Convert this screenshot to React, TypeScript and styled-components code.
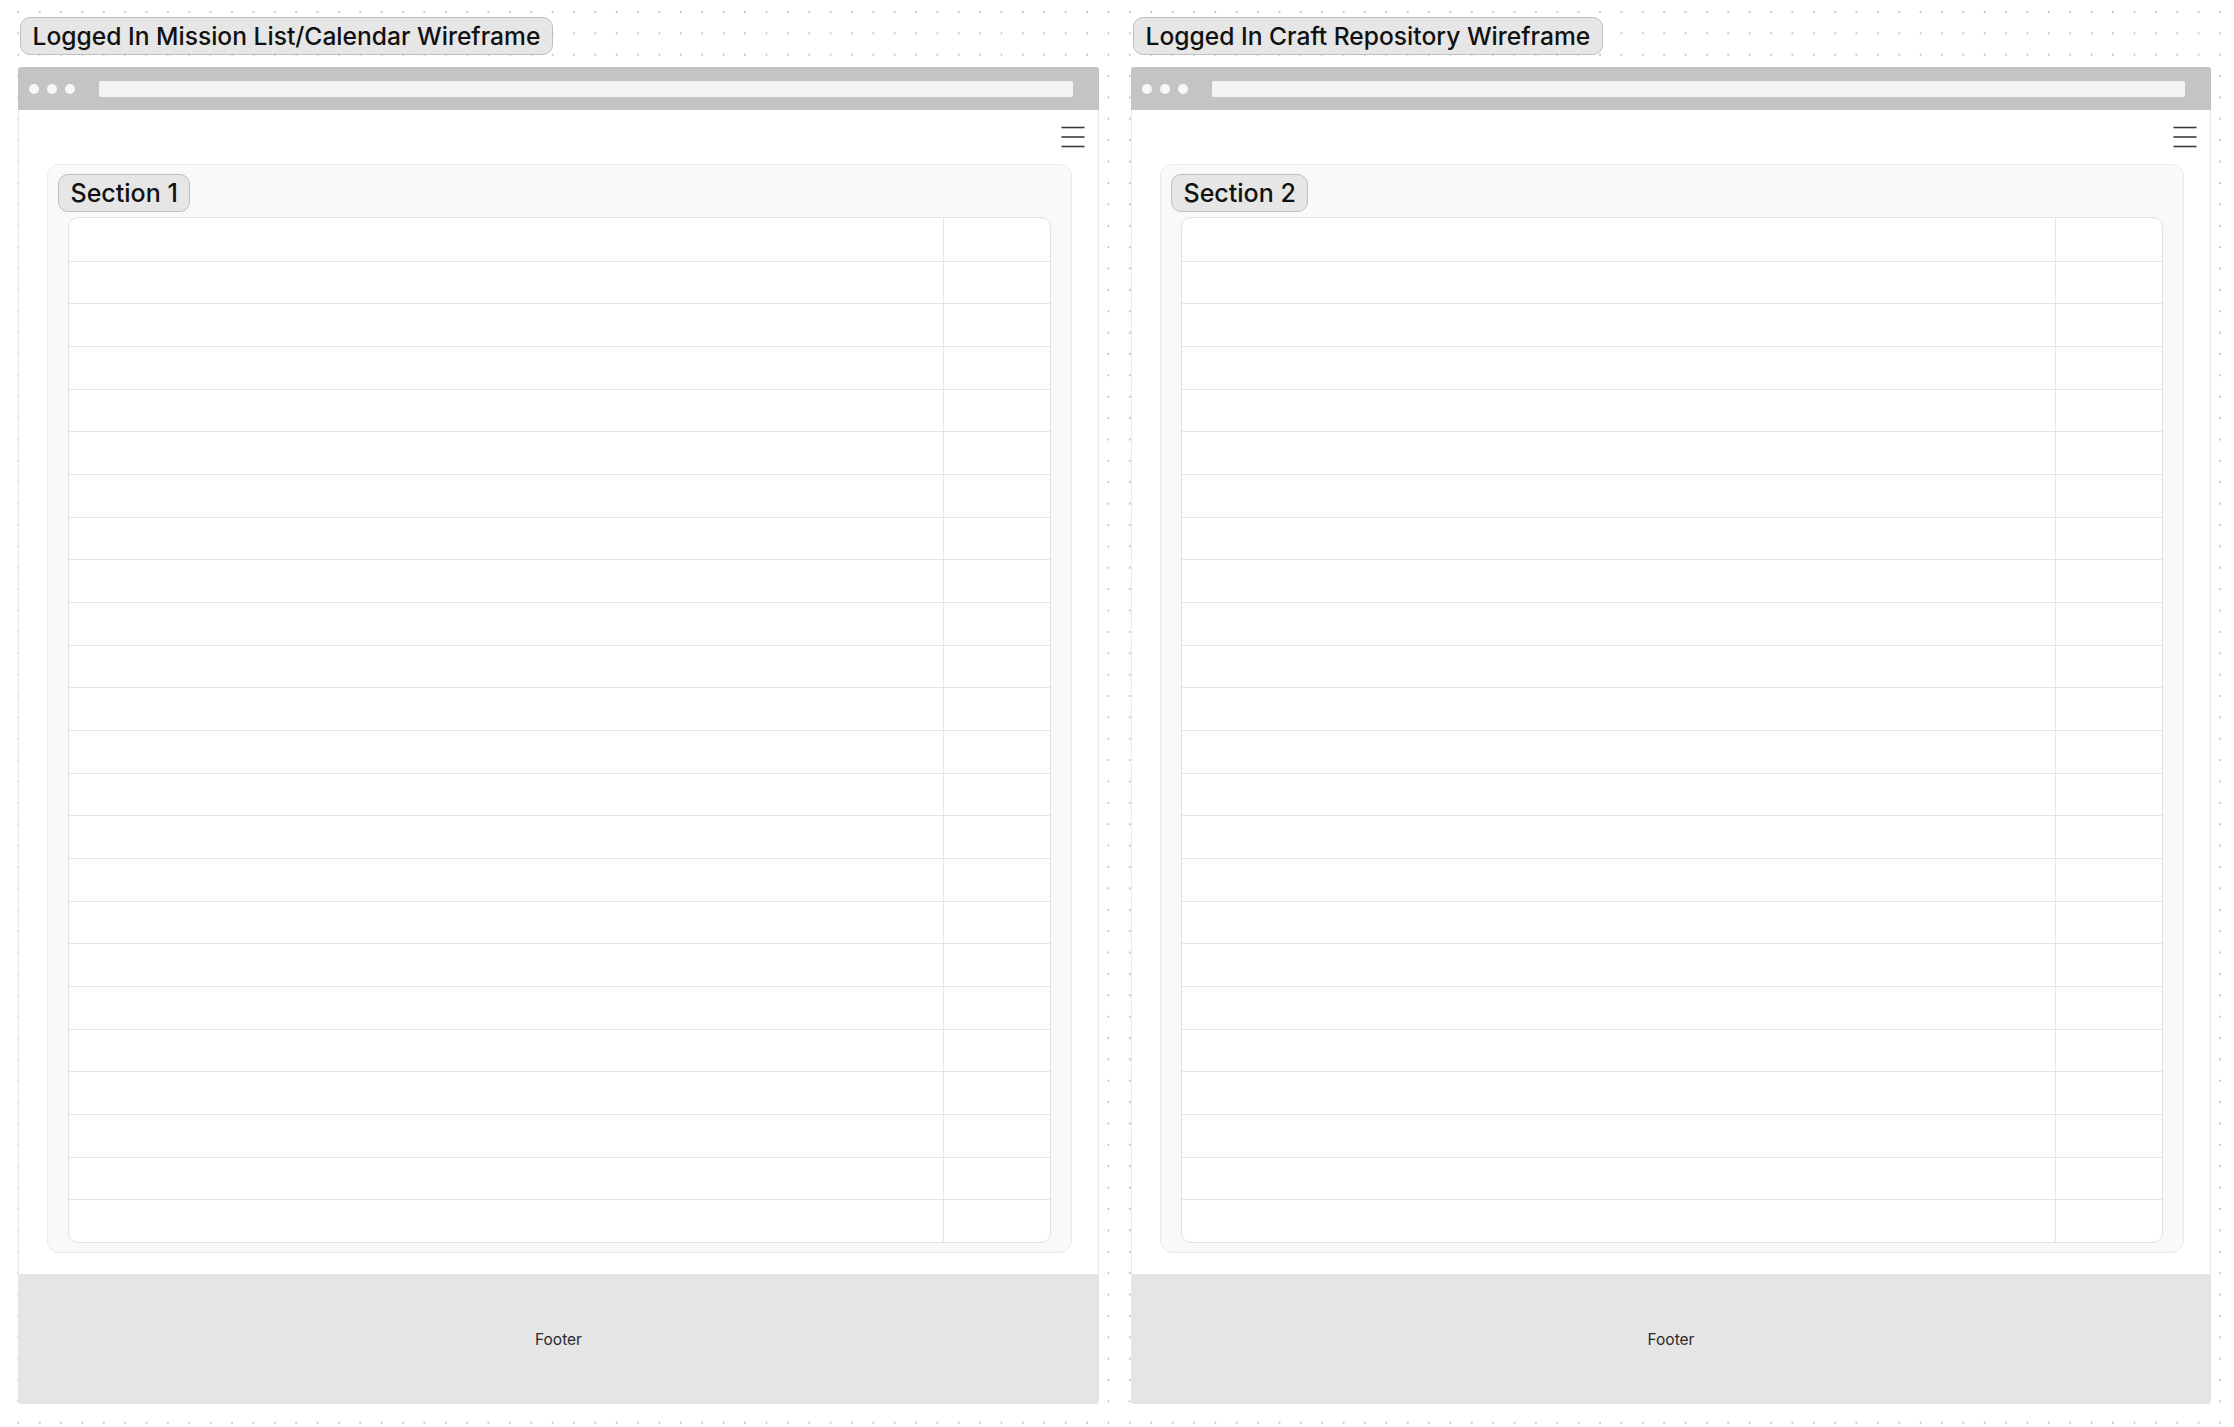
import React from "react";
import styled, { createGlobalStyle } from "styled-components";

const GlobalStyle = createGlobalStyle`
  html, body {
    margin: 0;
    padding: 0;
    background-color: #ffffff;
    font-family: Inter, "Noto Sans", "Liberation Sans", sans-serif;
  }
  * { box-sizing: border-box; }
`;

const Canvas = styled.div`
  width: 2234px;
  height: 1427px;
  overflow: hidden;
  background-color: #ffffff;
  background-image: radial-gradient(circle, #c9c9c9 0.9px, rgba(255,255,255,0) 1.4px);
  background-size: 21.38px 21.38px;
  background-position: 7.6px 1.3px;
  padding: 17px 0 0 18px;
  display: grid;
  grid-template-columns: 1081px 1080px;
  column-gap: 32px;
  align-items: start;
`;

const Column = styled.div`
  display: flex;
  flex-direction: column;
  align-items: flex-start;
`;

const Badge = styled.div<{ $ml?: number; $size: number }>`
  margin-left: ${(p) => p.$ml ?? 0}px;
  height: 38px;
  display: inline-flex;
  align-items: center;
  padding: 0 11.5px;
  background: #e6e6e6;
  border: 1.5px solid #bfbfbf;
  border-radius: 10px;
  color: #111111;
  font-size: ${(p) => p.$size}px;
  font-weight: 500;
  white-space: nowrap;
`;

const Frame = styled.div`
  margin-top: 12px;
  width: 100%;
  display: flex;
  flex-direction: column;
`;

const BrowserBar = styled.div`
  height: 43px;
  background: #c4c4c4;
  border-radius: 3px 3px 0 0;
  display: flex;
  align-items: center;
  padding: 0 26px 0 11px;
`;

const Dots = styled.div`
  display: flex;
  gap: 8px;
  margin-right: 24px;
`;

const Dot = styled.span`
  width: 10px;
  height: 10px;
  border-radius: 50%;
  background: #f7f7f7;
`;

const UrlBar = styled.div`
  flex: 1;
  height: 16px;
  background: #f4f4f4;
  border-radius: 2px;
`;

const Body = styled.div`
  background: #ffffff;
  border-left: 1px solid #e9e9e9;
  border-right: 1px solid #e9e9e9;
  display: flex;
  flex-direction: column;
  padding-bottom: 21px;
`;

const Header = styled.div`
  height: 54px;
  display: flex;
  justify-content: flex-end;
  padding: 16px 13px 0 0;
`;

const Panel = styled.div`
  margin: 0 26px 0 28px;
  background: #f9f9f9;
  border: 1px solid #ebebeb;
  border-radius: 12px;
  padding: 9px 20px 9px 10px;
  display: flex;
  flex-direction: column;
  align-items: flex-start;
`;

const Table = styled.div`
  margin: 5px 0 0 10px;
  align-self: stretch;
  height: 1026px;
  background: #ffffff;
  border: 1px solid #e2e2e2;
  border-radius: 10px;
  display: grid;
  grid-template-rows: repeat(24, 1fr);
  overflow: hidden;
`;

const Row = styled.div<{ $first?: boolean }>`
  display: grid;
  grid-template-columns: 1fr 107px;
  border-top: ${(p) => (p.$first ? "none" : "1px solid #e5e5e5")};
`;

const Cell = styled.div<{ $divider?: boolean }>`
  border-left: ${(p) => (p.$divider ? "1px solid #e5e5e5" : "none")};
`;

const Footer = styled.div`
  height: 130px;
  background: #e5e5e5;
  border-radius: 0 0 3px 3px;
  display: flex;
  align-items: center;
  justify-content: center;
  font-size: 15.5px;
  color: #2a2a2a;
`;

const Hamburger = () => (
  <svg width="24" height="22" viewBox="0 0 24 22" fill="none">
    <line x1="0.5" y1="1.5" x2="23.5" y2="1.5" stroke="#3c3c3c" strokeWidth="1.6" />
    <line x1="0.5" y1="11" x2="23.5" y2="11" stroke="#3c3c3c" strokeWidth="1.6" />
    <line x1="0.5" y1="20.5" x2="23.5" y2="20.5" stroke="#3c3c3c" strokeWidth="1.6" />
  </svg>
);

const rows = Array.from({ length: 24 }, (_, i) => i);

const Wireframe: React.FC<{ title: string; section: string }> = ({ title, section }) => (
  <Column>
    <Badge $ml={2} $size={24.6}>{title}</Badge>
    <Frame>
      <BrowserBar>
        <Dots>
          <Dot />
          <Dot />
          <Dot />
        </Dots>
        <UrlBar />
      </BrowserBar>
      <Body>
        <Header>
          <Hamburger />
        </Header>
        <Panel>
          <Badge $size={25}>{section}</Badge>
          <Table>
            {rows.map((i) => (
              <Row key={i} $first={i === 0}>
                <Cell />
                <Cell $divider />
              </Row>
            ))}
          </Table>
        </Panel>
      </Body>
      <Footer>Footer</Footer>
    </Frame>
  </Column>
);

export default function App() {
  return (
    <>
      <GlobalStyle />
      <Canvas>
        <Wireframe title="Logged In Mission List/Calendar Wireframe" section="Section 1" />
        <Wireframe title="Logged In Craft Repository Wireframe" section="Section 2" />
      </Canvas>
    </>
  );
}
